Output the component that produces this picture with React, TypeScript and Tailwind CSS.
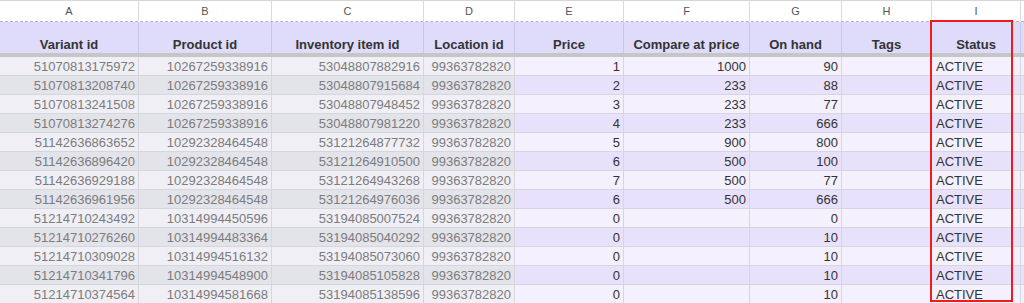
import React from 'react';

const cols = [
  { letter: 'A', title: 'Variant id', w: 'w-[139px]' },
  { letter: 'B', title: 'Product id', w: 'w-[133px]' },
  { letter: 'C', title: 'Inventory item id', w: 'w-[152px]' },
  { letter: 'D', title: 'Location id', w: 'w-[91px]' },
  { letter: 'E', title: 'Price', w: 'w-[109px]' },
  { letter: 'F', title: 'Compare at price', w: 'w-[126px]' },
  { letter: 'G', title: 'On hand', w: 'w-[92px]' },
  { letter: 'H', title: 'Tags', w: 'w-[90px]' },
  { letter: 'I', title: 'Status', w: 'w-[89px]' },
];

const rows: string[][] = [
  ['51070813175972', '10267259338916', '53048807882916', '99363782820', '1', '1000', '90'],
  ['51070813208740', '10267259338916', '53048807915684', '99363782820', '2', '233', '88'],
  ['51070813241508', '10267259338916', '53048807948452', '99363782820', '3', '233', '77'],
  ['51070813274276', '10267259338916', '53048807981220', '99363782820', '4', '233', '666'],
  ['51142636863652', '10292328464548', '53121264877732', '99363782820', '5', '900', '800'],
  ['51142636896420', '10292328464548', '53121264910500', '99363782820', '6', '500', '100'],
  ['51142636929188', '10292328464548', '53121264943268', '99363782820', '7', '500', '77'],
  ['51142636961956', '10292328464548', '53121264976036', '99363782820', '6', '500', '666'],
  ['51214710243492', '10314994450596', '53194085007524', '99363782820', '0', '', '0'],
  ['51214710276260', '10314994483364', '53194085040292', '99363782820', '0', '', '10'],
  ['51214710309028', '10314994516132', '53194085073060', '99363782820', '0', '', '10'],
  ['51214710341796', '10314994548900', '53194085105828', '99363782820', '0', '', '10'],
  ['51214710374564', '10314994581668', '53194085138596', '99363782820', '0', '', '10'],
];

export default function App() {
  return (
    <div className="relative w-[1024px] h-[303px] overflow-hidden bg-white font-['Liberation_Sans',Arial,sans-serif] text-[13px]">
      {/* column letters */}
      <div className="flex h-[21px] border-t border-[#d6d6d6]">
        {cols.map(c => (
          <div key={c.letter} className={`${c.w} shrink-0 border-r border-[#dadada] flex items-center justify-center text-[11px] text-[#555]`}>
            {c.letter}
          </div>
        ))}
        <div className="flex-1" />
      </div>
      <div className="h-px border-t border-dashed border-[#b4b4c4]" />
      {/* header */}
      <div className="flex h-[31px] bg-[#dedcfa]">
        {cols.map(c => (
          <div key={c.title} className={`${c.w} shrink-0 border-r border-[#c9c8e6] flex items-end justify-center pb-[2px] leading-none font-bold text-[#333]`}>
            {c.title}
          </div>
        ))}
        <div className="flex-1" />
      </div>
      <div className="h-[4px] bg-[#c6c6c6]" />
      {/* body */}
      {rows.map((r, i) => {
        const odd = i % 2 === 0;
        return (
          <div key={i} className="flex h-[19px] border-b border-[#d6d6dc]">
            {cols.map((c, j) => {
              const grayCol = j < 4;
              const bg = grayCol
                ? odd ? 'bg-[#efeff5]' : 'bg-[#e3e3ea]'
                : odd ? 'bg-[#f4f0fd]' : 'bg-[#e8e1fb]';
              const txt = grayCol ? 'text-[#7c7c7c]' : 'text-[#333]';
              const val = j === 8 ? 'ACTIVE' : j === 7 ? '' : r[j];
              const align = j === 8 ? 'justify-start pl-[4px]' : 'justify-end pr-[3px]';
              return (
                <div key={j} className={`${c.w} shrink-0 ${bg} ${txt} border-r border-[#d6d6dc] flex items-center ${align} leading-none`}>
                  {val}
                </div>
              );
            })}
            <div className={`flex-1 ${odd ? 'bg-[#f4f0fd]' : 'bg-[#e8e1fb]'}`} />
          </div>
        );
      })}
      {/* selection highlight */}
      <div className="absolute left-[930px] top-[20px] w-[83px] h-[282px] border-2 border-[#f01c1c] pointer-events-none" />
    </div>
  );
}
